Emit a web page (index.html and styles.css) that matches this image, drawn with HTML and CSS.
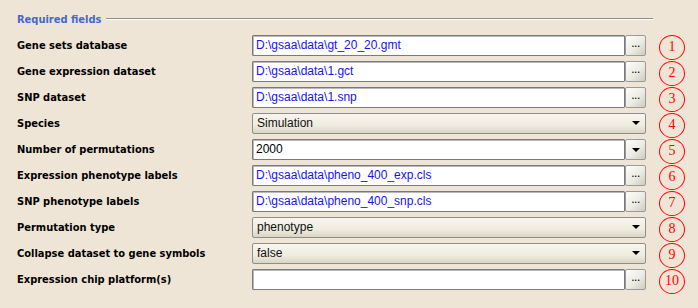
FILE: index.html
```html
<!DOCTYPE html>
<html lang="en">
<head>
  <meta charset="UTF-8" />
  <title>Required fields</title>
  <link rel="stylesheet" href="styles.css">
</head>
<body>
  <div class="legend">
    <span class="legend-title">Required fields</span>
    <span class="legend-line"></span>
  </div>
  <div class="form">
    <div class="row">
      <label>Gene sets database</label>
      <div class="field"><div class="text path">D:\gsaa\data\gt_20_20.gmt</div><button class="browse">...</button></div>
      <span class="num">1</span>
    </div>
    <div class="row">
      <label>Gene expression dataset</label>
      <div class="field"><div class="text path">D:\gsaa\data\1.gct</div><button class="browse">...</button></div>
      <span class="num">2</span>
    </div>
    <div class="row">
      <label>SNP dataset</label>
      <div class="field"><div class="text path">D:\gsaa\data\1.snp</div><button class="browse">...</button></div>
      <span class="num">3</span>
    </div>
    <div class="row">
      <label>Species</label>
      <div class="field"><div class="combo">Simulation<span class="arrow"></span></div></div>
      <span class="num">4</span>
    </div>
    <div class="row">
      <label>Number of permutations</label>
      <div class="field"><div class="text">2000</div><button class="drop"><span class="arrow"></span></button></div>
      <span class="num">5</span>
    </div>
    <div class="row">
      <label>Expression phenotype labels</label>
      <div class="field"><div class="text path">D:\gsaa\data\pheno_400_exp.cls</div><button class="browse">...</button></div>
      <span class="num">6</span>
    </div>
    <div class="row">
      <label>SNP phenotype labels</label>
      <div class="field"><div class="text path">D:\gsaa\data\pheno_400_snp.cls</div><button class="browse">...</button></div>
      <span class="num">7</span>
    </div>
    <div class="row">
      <label>Permutation type</label>
      <div class="field"><div class="combo">phenotype<span class="arrow"></span></div></div>
      <span class="num">8</span>
    </div>
    <div class="row">
      <label>Collapse dataset to gene symbols</label>
      <div class="field"><div class="combo">false<span class="arrow"></span></div></div>
      <span class="num">9</span>
    </div>
    <div class="row">
      <label>Expression chip platform(s)</label>
      <div class="field"><div class="text path"></div><button class="browse">...</button></div>
      <span class="num">10</span>
    </div>
  </div>
</body>
</html>
```

FILE: styles.css
```css
body {
  margin: 0;
  background: #efe5d6;
  font-family: 'Liberation Sans', Arial, sans-serif;
  font-size: 12px;
  width: 698px;
  height: 308px;
  overflow: hidden;
}

.legend {
  display: flex;
  align-items: center;
  padding: 12px 0 0 17px;
  width: 636px;
  height: 14px;
}
.legend-title {
  color: #4368cf;
  font-family: 'DejaVu Sans Condensed', 'DejaVu Sans', sans-serif;
  font-stretch: condensed;
  font-weight: bold;
  font-size: 11px;
  white-space: nowrap;
}
.legend-line {
  flex: 1;
  height: 0;
  border-top: 1px solid #8c8c8c;
  border-bottom: 1px solid #fff;
  margin-left: 5px;
}

.form {
  display: flex;
  flex-direction: column;
  gap: 5px;
  padding: 9px 0 0 17px;
}
.row {
  display: flex;
  align-items: center;
  height: 21px;
}
label {
  width: 235px;
  font-family: 'DejaVu Sans Condensed', 'DejaVu Sans', sans-serif;
  font-stretch: condensed;
  font-weight: bold;
  font-size: 11px;
  color: #000;
}
.field {
  display: flex;
  width: 394px;
  height: 21px;
}
.text {
  flex: 1;
  box-sizing: border-box;
  background: #fff;
  border: 1px solid #7a7a7a;
  box-shadow: inset 1px 1px 0 #b9b9b9;
  border-radius: 1px;
  padding: 2px 3px;
  font-size: 12px;
  line-height: 15px;
  color: #000;
}
.path { color: #1414f0; }
.browse, .drop {
  width: 21px;
  height: 21px;
  box-sizing: border-box;
  border: 1px solid #9a9a9a;
  border-radius: 2px;
  background: linear-gradient(135deg, #fdfdfb 0%, #ecebe4 55%, #cfccbc 100%);
  padding: 0 0 4px;
  font-family: 'Liberation Sans', sans-serif;
  font-size: 12px;
  color: #000;
  line-height: 11px;
  letter-spacing: -0.5px;
  display: flex;
  align-items: center;
  justify-content: center;
}
.drop { padding: 0; }
.combo {
  flex: 1;
  box-sizing: border-box;
  position: relative;
  border: 1px solid #8e8e8e;
  border-radius: 2px;
  background: linear-gradient(#f7f5ed 0%, #efece0 60%, #d9d5c4 100%);
  padding: 2px 4px;
  font-size: 12px;
  line-height: 15px;
  color: #111;
}
.arrow {
  width: 0;
  height: 0;
  border-left: 4px solid transparent;
  border-right: 4px solid transparent;
  border-top: 4px solid #000;
}
.combo .arrow {
  position: absolute;
  right: 5px;
  top: 7px;
}
.num {
  width: 24px;
  height: 23px;
  margin: 3px 0 0 13px;
  border: 1.5px solid #f00;
  border-radius: 50%;
  color: #f00;
  font-family: 'Liberation Serif', serif;
  font-size: 14px;
  display: flex;
  align-items: center;
  justify-content: center;
}
```
